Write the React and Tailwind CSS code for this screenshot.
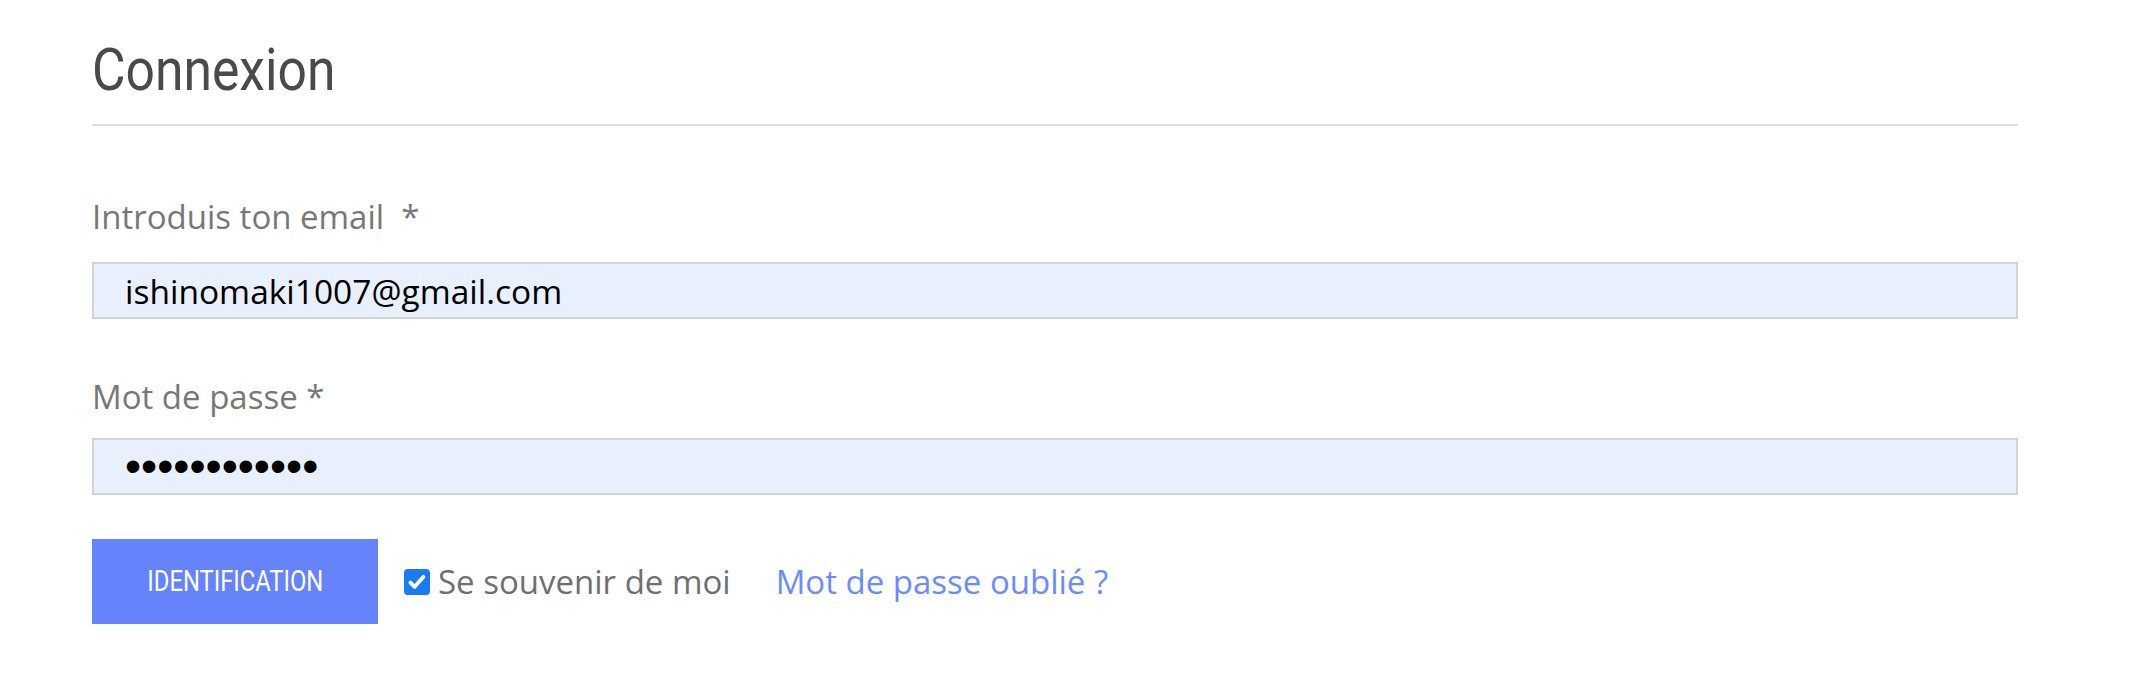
import { useState } from "react";

const label = "text-[33px] leading-none text-[#777777]";
const field =
  "w-full h-[57px] border-2 border-[#d3d3d3] bg-[#e8f0fe] px-[31px] text-black outline-none";

const App = () => {
  const [formData, setFormData] = useState({
    email: "ishinomaki1007@gmail.com",
    password: "ishinomaki07",
  });
  const [remember, setRemember] = useState(true);

  const handleChange = (e) => {
    setFormData({ ...formData, [e.target.id]: e.target.value });
  };

  return (
    <div className="min-h-screen bg-white font-['Open_Sans','Liberation_Sans',sans-serif]">
      <div className="pl-[92px] pr-[130px] pt-[40px]">
        {/* condensed face isn't installed, so squeeze Roboto a bit */}
        <h1 className="origin-left scale-x-[0.86] font-['Roboto',sans-serif] text-[60px] leading-none text-[#4a4a4a]">
          Connexion
        </h1>
        <div className="mt-[24px] h-[2px] bg-[#dedede]" />

        <form onSubmit={(e) => e.preventDefault()}>
          <label htmlFor="email" className={`block mt-[74px] ${label}`}>
            Introduis ton email&nbsp; *
          </label>
          <input
            id="email"
            type="email"
            value={formData.email}
            onChange={handleChange}
            className={`mt-[29px] ${field} text-[33.5px]`}
          />

          <label htmlFor="password" className={`block mt-[61px] ${label}`}>
            Mot de passe *
          </label>
          <input
            id="password"
            type="password"
            value={formData.password}
            onChange={handleChange}
            className={`mt-[25px] ${field} font-['Liberation_Sans',sans-serif] text-[46px]`}
          />

          <div className="mt-[44px] flex items-center">
            <button
              type="submit"
              className="flex h-[85px] w-[286px] items-center justify-center bg-[#6583fb] text-white"
            >
              <span className="inline-block scale-x-[0.82] font-['Roboto',sans-serif] text-[29px]">
                IDENTIFICATION
              </span>
            </button>
            <label className="ml-[26px] flex items-center cursor-pointer">
              <input
                type="checkbox"
                checked={remember}
                onChange={(e) => setRemember(e.target.checked)}
                className="sr-only"
              />
              <span
                className={`flex h-[26px] w-[26px] items-center justify-center rounded-[4px] ${
                  remember ? "bg-[#1a7cf5]" : "border-2 border-[#767676] bg-white"
                }`}
              >
                {remember && (
                  <svg viewBox="0 0 16 16" className="h-[22px] w-[22px]">
                    <path
                      d="M3.2 8.4l3.1 3.1 6.3-7.2"
                      fill="none"
                      stroke="white"
                      strokeWidth="2.8"
                      strokeLinecap="round"
                      strokeLinejoin="round"
                    />
                  </svg>
                )}
              </span>
              <span className="ml-[8px] text-[33px] text-[#6f6f6f]">Se souvenir de moi</span>
            </label>
            <a href="#" className="ml-[45px] text-[33px] text-[#6a8cff]">
              Mot de passe oublié ?
            </a>
          </div>
        </form>
      </div>
    </div>
  );
};

export default App;
